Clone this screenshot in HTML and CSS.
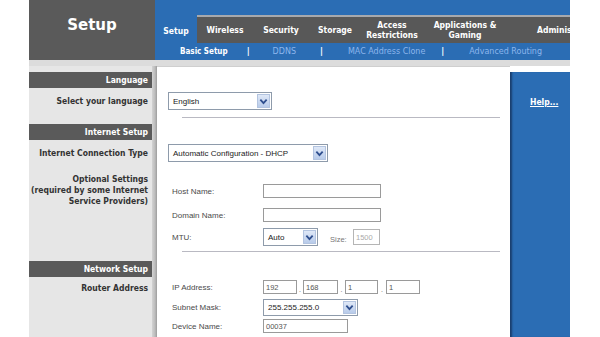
FILE: index.html
```html
<!DOCTYPE html>
<html>
<head>
<meta charset="utf-8">
<link rel="stylesheet" href="styles.css">
</head>
<body>
<div class="page">
  <div class="header">
    <div class="brand">Setup</div>
    <div class="nav">
      <div class="nav-top"></div>
      <div class="tabs">
        <div class="tab active">Setup</div>
        <div class="tab-rest">
          <div class="tab w-wireless">Wireless</div>
          <div class="tab w-security">Security</div>
          <div class="tab w-storage">Storage</div>
          <div class="tab w-access">Access<br>Restrictions</div>
          <div class="tab w-apps">Applications &amp;<br>Gaming</div>
          <div class="tab w-admin">Administration</div>
        </div>
      </div>
      <div class="subnav">
        <span class="sub current">Basic Setup</span>
        <span class="sep sep1">|</span>
        <span class="sub">DDNS</span>
        <span class="sep sep2">|</span>
        <span class="sub">MAC Address Clone</span>
        <span class="sep sep3">|</span>
        <span class="sub">Advanced Routing</span>
      </div>
    </div>
  </div>
  <div class="strip"></div>
  <div class="main">
    <div class="side">
      <div class="bar">Language</div>
      <div class="lrow r-lang">Select your language</div>
      <div class="bar">Internet Setup</div>
      <div class="lrow r-inet">
        <div>Internet Connection Type</div>
        <div class="opt">Optional Settings<br>(required by some Internet<br>Service Providers)</div>
      </div>
      <div class="bar">Network Setup</div>
      <div class="lrow r-router">Router Address</div>
    </div>
    <div class="shade"></div>
    <div class="content">
      <div class="sel s-lang"><span class="val">English</span><span class="arrow"><svg viewBox="0 0 10 10" width="9" height="9"><path d="M1.5 3 L5 6.8 L8.5 3" fill="none" stroke="#2f4f8f" stroke-width="2"/></svg></span></div>
      <div class="rule r1"></div>
      <div class="sel s-dhcp"><span class="val">Automatic Configuration - DHCP</span><span class="arrow"><svg viewBox="0 0 10 10" width="9" height="9"><path d="M1.5 3 L5 6.8 L8.5 3" fill="none" stroke="#2f4f8f" stroke-width="2"/></svg></span></div>
      <div class="row row-host"><span class="lbl">Host Name:</span><span class="inp i-name"></span></div>
      <div class="row row-domain"><span class="lbl">Domain Name:</span><span class="inp i-name"></span></div>
      <div class="row row-mtu"><span class="lbl">MTU:</span><span class="sel s-mtu"><span class="val">Auto</span><span class="arrow"><svg viewBox="0 0 10 10" width="9" height="9"><path d="M1.5 3 L5 6.8 L8.5 3" fill="none" stroke="#2f4f8f" stroke-width="2"/></svg></span></span><span class="size">Size:</span><span class="inp i-size">1500</span></div>
      <div class="rule r2"></div>
      <div class="row row-ip"><span class="lbl">IP Address:</span><span class="inp i-oct o1">192</span><span class="dot d1">.</span><span class="inp i-oct o2">168</span><span class="dot d2">.</span><span class="inp i-oct o3">1</span><span class="dot d3">.</span><span class="inp i-oct o4">1</span></div>
      <div class="row row-mask"><span class="lbl">Subnet Mask:</span><span class="sel s-mask"><span class="val">255.255.255.0</span><span class="arrow"><svg viewBox="0 0 10 10" width="9" height="9"><path d="M1.5 3 L5 6.8 L8.5 3" fill="none" stroke="#2f4f8f" stroke-width="2"/></svg></span></span></div>
      <div class="row row-dev"><span class="lbl">Device Name:</span><span class="inp i-dev">00037</span></div>
    </div>
    <div class="help">
      <div class="help-inner"><span class="help-link">Help...</span></div>
    </div>
  </div>
</div>
</body>
</html>
```
FILE: styles.css
```css
* { box-sizing: border-box; }
html, body { margin: 0; padding: 0; background: #ffffff; }
body { font-family: "Liberation Sans", Arial, sans-serif; overflow: hidden; }
.page { width: 541px; margin-left: 29px; height: 337px; overflow: hidden; }

.header { display: flex; height: 60px; }
.brand {
  width: 126px; background: #5a5a5a; color: #fff;
  font-family: "DejaVu Sans", sans-serif; font-weight: bold; font-size: 15px;
  text-align: center; padding-top: 16px;
}
.nav { width: 415px; background: #2b6db4; overflow: hidden; display: flex; flex-direction: column; }
.nav-top { height: 15px; }
.tabs { height: 28px; display: flex; }
.tab {
  color: #fff; font-family: "DejaVu Sans Condensed", "DejaVu Sans", sans-serif; font-weight: bold;
  font-size: 8.5px; line-height: 10px; text-align: center;
  display: flex; align-items: center; justify-content: center; flex-shrink: 0;
}
.tab.active { width: 42px; background: #2b6db4; padding-top: 3px; }
.tab-rest { display: flex; background: #585858; border-top: 2px solid #a7a9ad; flex: 1; overflow: hidden; }
.w-wireless { width: 56px; }
.w-security { width: 56px; }
.w-storage { width: 52px; }
.w-access { width: 62px; }
.w-apps { width: 84px; }
.w-admin { width: 80px; justify-content: flex-start; padding-left: 30px; white-space: nowrap; overflow: hidden; }

.subnav {
  height: 17px; display: flex; align-items: center; padding-left: 25px;
  font-family: "DejaVu Sans", sans-serif; font-size: 8px;
  color: #8db6ec; white-space: nowrap;
}
.sub.current { color: #ffffff; font-weight: bold; font-family: "DejaVu Sans Condensed", "DejaVu Sans", sans-serif; }
.sep { color: #fff; font-weight: bold; }
.sep1 { margin: 0 23px 0 19px; }
.sep2 { margin: 0 25px 0 24px; }
.sep3 { margin: 0 25px 0 16px; }

.strip { height: 6px; background: #dcdcdc; }

.main { display: grid; grid-template-columns: 123px 5px 353px 60px; height: 271px; }
.side { background: #e6e6e6; padding-top: 6px; }
.bar {
  height: 16px; background: #5a5a5a; color: #fff; text-align: right;
  font-family: "DejaVu Sans Condensed", "DejaVu Sans", sans-serif; font-weight: bold; font-size: 8.5px;
  line-height: 16px; padding-right: 4px;
}
.lrow {
  text-align: right; padding-right: 4px; color: #333;
  font-family: "DejaVu Sans Condensed", "DejaVu Sans", sans-serif; font-weight: bold; font-size: 8.5px; line-height: 11px;
}
.r-lang { height: 36px; padding-top: 8px; }
.r-inet { height: 121px; padding-top: 8px; }
.r-inet .opt { margin-top: 15px; }
.r-router { padding-top: 6px; }

.shade { background: linear-gradient(to right, #d3d3d3, #bcbcbc 60%, #9c9c9c); }

.content { background: #fff; border-top: 1px solid #cfcfcf; display: flex; flex-direction: column; align-items: flex-start; color: #444; font-size: 8px; }

.sel {
  display: flex; align-items: stretch; border: 1px solid #8e9bab; background: #fff;
  height: 18px; font-size: 8px; color: #222;
}
.sel .val { flex: 1; padding-left: 4px; display: flex; align-items: center; }
.arrow {
  width: 13px; margin: 1px; background: linear-gradient(#dfe8f7, #b8cbea);
  border: 1px solid #b3c4e0; display: flex; align-items: center; justify-content: center;
}
.s-lang { width: 104px; margin-top: 25px; margin-left: 11px; }
.rule { height: 1px; background: #b9b9c2; width: 318px; margin-left: 25px; }
.r1 { margin-top: 7px; }
.s-dhcp { width: 160px; margin-top: 26px; margin-left: 11px; }

.row { display: flex; align-items: center; margin-left: 15px; }
.lbl { width: 91px; color: #4a4a4a; }
.inp {
  border: 1px solid #9a9a9a; height: 14px; background: #fff; color: #555;
  font-size: 7.5px; padding-left: 2px; display: flex; align-items: center;
}
.i-name { width: 118px; }
.row-host { margin-top: 22px; }
.row-domain { margin-top: 10px; }
.row-mtu { margin-top: 6px; }
.s-mtu { width: 55px; }
.size { margin-left: 12px; width: 23px; color: #777; font-size: 7.5px; padding-top: 4px; }
.i-size { width: 27px; height: 16px; color: #aaa; border-color: #b5b5b5; }
.r2 { margin-top: 5px; }
.row-ip { margin-top: 28px; }
.o1 { width: 34px; }
.o2 { width: 35px; }
.o3 { width: 33px; }
.o4 { width: 34px; }
.dot { text-align: center; font-size: 7px; color: #666; padding-top: 4px; }
.d1 { width: 6px; }
.d2 { width: 7px; }
.d3 { width: 8px; }
.row-mask { margin-top: 5px; }
.s-mask { width: 95px; height: 17px; }
.row-dev { margin-top: 3px; }
.i-dev { width: 85px; }

.help { padding-top: 6px; background: #fff; }
.help-inner {
  height: 100%; background: #2b6db4;
  box-shadow: inset 3px 0 2px -1px #1a3f6e;
  padding-top: 19px; padding-left: 20px;
}
.help-link {
  color: #fff; font-family: "DejaVu Sans Condensed", "DejaVu Sans", sans-serif; font-weight: bold;
  font-size: 8.5px; text-decoration: underline;
}
```
